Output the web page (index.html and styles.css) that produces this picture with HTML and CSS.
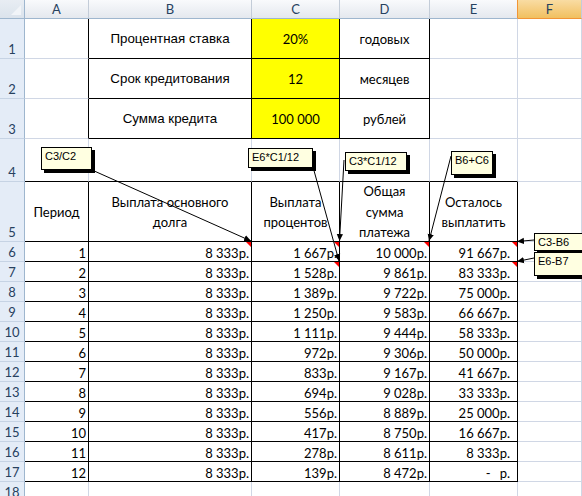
FILE: index.html
```html
<!DOCTYPE html>
<html lang="ru">
<head>
<meta charset="utf-8">
<title>Кредит</title>
<link rel="stylesheet" href="styles.css">
</head>
<body>
<div class="sheet">
  <div class="cell corner"></div>
  <div class="cell ch">A</div>
  <div class="cell ch">B</div>
  <div class="cell ch">C</div>
  <div class="cell ch">D</div>
  <div class="cell ch ch-e">E</div>
  <div class="cell ch ch-sel">F</div>

  <div class="cell rh">1</div>
  <div class="cell kr"></div>
  <div class="cell kr kb mid arial">Процентная ставка</div>
  <div class="cell kr kb mid yel">20%</div>
  <div class="cell kr kb mid">годовых</div>
  <div class="cell"></div>
  <div class="cell"></div>

  <div class="cell rh">2</div>
  <div class="cell kr"></div>
  <div class="cell kr kb mid arial">Срок кредитования</div>
  <div class="cell kr kb mid yel">12</div>
  <div class="cell kr kb mid">месяцев</div>
  <div class="cell"></div>
  <div class="cell"></div>

  <div class="cell rh">3</div>
  <div class="cell kr"></div>
  <div class="cell kr kb mid arial">Сумма кредита</div>
  <div class="cell kr kb mid yel">100 000</div>
  <div class="cell kr kb mid">рублей</div>
  <div class="cell"></div>
  <div class="cell"></div>

  <div class="cell rh">4</div>
  <div class="cell kb"></div>
  <div class="cell kb"></div>
  <div class="cell kb"></div>
  <div class="cell kb"></div>
  <div class="cell kb"></div>
  <div class="cell"></div>

  <div class="cell rh">5</div>
  <div class="cell kr kb head">Период</div>
  <div class="cell kr kb head">Выплата основного<br>долга</div>
  <div class="cell kr kb head">Выплата<br>процентов</div>
  <div class="cell kr kb head">Общая<br>сумма<br>платежа</div>
  <div class="cell kr kb head">Осталось<br>выплатить</div>
  <div class="cell"></div>

  <div class="cell rh">6</div>
  <div class="cell kr kb num">1</div>
  <div class="cell kr kb num note">8 333р.</div>
  <div class="cell kr kb num note">1 667р.</div>
  <div class="cell kr kb num note">10 000р.</div>
  <div class="cell kr kb num ne note">91 667р.</div>
  <div class="cell"></div>

  <div class="cell rh">7</div>
  <div class="cell kr kb num">2</div>
  <div class="cell kr kb num">8 333р.</div>
  <div class="cell kr kb num note">1 528р.</div>
  <div class="cell kr kb num">9 861р.</div>
  <div class="cell kr kb num ne note">83 333р.</div>
  <div class="cell"></div>

  <div class="cell rh">8</div>
  <div class="cell kr kb num">3</div>
  <div class="cell kr kb num">8 333р.</div>
  <div class="cell kr kb num">1 389р.</div>
  <div class="cell kr kb num">9 722р.</div>
  <div class="cell kr kb num ne">75 000р.</div>
  <div class="cell"></div>

  <div class="cell rh">9</div>
  <div class="cell kr kb num">4</div>
  <div class="cell kr kb num">8 333р.</div>
  <div class="cell kr kb num">1 250р.</div>
  <div class="cell kr kb num">9 583р.</div>
  <div class="cell kr kb num ne">66 667р.</div>
  <div class="cell"></div>

  <div class="cell rh">10</div>
  <div class="cell kr kb num">5</div>
  <div class="cell kr kb num">8 333р.</div>
  <div class="cell kr kb num">1 111р.</div>
  <div class="cell kr kb num">9 444р.</div>
  <div class="cell kr kb num ne">58 333р.</div>
  <div class="cell"></div>

  <div class="cell rh">11</div>
  <div class="cell kr kb num">6</div>
  <div class="cell kr kb num">8 333р.</div>
  <div class="cell kr kb num">972р.</div>
  <div class="cell kr kb num">9 306р.</div>
  <div class="cell kr kb num ne">50 000р.</div>
  <div class="cell"></div>

  <div class="cell rh">12</div>
  <div class="cell kr kb num">7</div>
  <div class="cell kr kb num">8 333р.</div>
  <div class="cell kr kb num">833р.</div>
  <div class="cell kr kb num">9 167р.</div>
  <div class="cell kr kb num ne">41 667р.</div>
  <div class="cell"></div>

  <div class="cell rh">13</div>
  <div class="cell kr kb num">8</div>
  <div class="cell kr kb num">8 333р.</div>
  <div class="cell kr kb num">694р.</div>
  <div class="cell kr kb num">9 028р.</div>
  <div class="cell kr kb num ne">33 333р.</div>
  <div class="cell"></div>

  <div class="cell rh">14</div>
  <div class="cell kr kb num">9</div>
  <div class="cell kr kb num">8 333р.</div>
  <div class="cell kr kb num">556р.</div>
  <div class="cell kr kb num">8 889р.</div>
  <div class="cell kr kb num ne">25 000р.</div>
  <div class="cell"></div>

  <div class="cell rh">15</div>
  <div class="cell kr kb num">10</div>
  <div class="cell kr kb num">8 333р.</div>
  <div class="cell kr kb num">417р.</div>
  <div class="cell kr kb num">8 750р.</div>
  <div class="cell kr kb num ne">16 667р.</div>
  <div class="cell"></div>

  <div class="cell rh">16</div>
  <div class="cell kr kb num">11</div>
  <div class="cell kr kb num">8 333р.</div>
  <div class="cell kr kb num">278р.</div>
  <div class="cell kr kb num">8 611р.</div>
  <div class="cell kr kb num ne">8 333р.</div>
  <div class="cell"></div>

  <div class="cell rh">17</div>
  <div class="cell kr kb num">12</div>
  <div class="cell kr kb num">8 333р.</div>
  <div class="cell kr kb num">139р.</div>
  <div class="cell kr kb num">8 472р.</div>
  <div class="cell kr kb num ne"><span class="dash">-</span>р.</div>
  <div class="cell"></div>

  <div class="cell rh">18</div>
  <div class="cell"></div>
  <div class="cell"></div>
  <div class="cell"></div>
  <div class="cell"></div>
  <div class="cell"></div>
  <div class="cell"></div>
</div>

<svg class="arrows" width="582" height="496" viewBox="0 0 582 496">
  <defs>
    <marker id="ah" viewBox="0 0 10 10" refX="10" refY="5" markerWidth="7" markerHeight="7" markerUnits="userSpaceOnUse" orient="auto">
      <path d="M0,0.5 L10,5 L0,9.5 z" fill="#000"/>
    </marker>
  </defs>
  <g stroke="#000" stroke-width="1" fill="none" marker-end="url(#ah)">
    <line x1="92" y1="170" x2="251" y2="241"/>
    <line x1="313" y1="167" x2="339" y2="261"/>
    <line x1="344" y1="160" x2="339.5" y2="241"/>
    <line x1="451" y1="156" x2="429" y2="241"/>
    <line x1="534" y1="240" x2="517" y2="241.5"/>
    <line x1="534" y1="258" x2="517" y2="261.5"/>
  </g>
</svg>

<div class="cmt c1">C3/C2</div>
<div class="cmt c2">E6*C1/12</div>
<div class="cmt c3">C3*C1/12</div>
<div class="cmt c4">B6+C6</div>
<div class="cmt c5">C3-B6</div>
<div class="cmt c6">E6-B7</div>
</body>
</html>
```

FILE: styles.css
```css
* {
  box-sizing: border-box;
  margin: 0;
  padding: 0;
}

html,
body {
  width: 582px;
  height: 496px;
  overflow: hidden;
  background: #fff;
}

body {
  position: relative;
  font-family: Lato, "Liberation Sans", sans-serif;
  font-size: 13px;
  color: #000;
}

.sheet {
  display: grid;
  grid-template-columns: 25px 64px 163px 88px 90px 88px 64px;
  grid-template-rows: 19px 40px 40px 40px 43px 60px repeat(13, 20px);
  width: 582px;
}

.cell {
  position: relative;
  display: flex;
  align-items: flex-end;
  line-height: 16px;
  white-space: nowrap;
  border-right: 1px solid #d0d7e5;
  border-bottom: 1px solid #d0d7e5;
}

/* headers */
.ch {
  align-items: center;
  justify-content: center;
  color: #27415f;
  background: linear-gradient(#f9fafc, #e4e8ee);
  border-right: 1px solid #c3ccd8;
  border-bottom: 1px solid #9eb6ce;
}

.ch-e {
  border-right-color: #f29536;
}

.ch-sel {
  background: linear-gradient(#f9dca3, #f1c060);
  border-bottom-color: #f29536;
  color: #27415f;
}

.corner {
  background: linear-gradient(#e8edf3, #dbe3ec);
  border-right: 1px solid #9eb6ce;
  border-bottom: 1px solid #9eb6ce;
}

.corner::after {
  content: "";
  position: absolute;
  right: 3px;
  bottom: 3px;
  border-style: solid;
  border-width: 0 0 10px 10px;
  border-color: transparent transparent #f1f4f8 transparent;
}

.rh {
  justify-content: center;
  color: #27415f;
  background: #e4ecf7;
  border-right: 1px solid #9eb6ce;
  border-bottom: 1px solid #c6d3e4;
  padding-bottom: 1px;
}

/* black borders */
.kr {
  border-right-color: #000;
}

.kb {
  border-bottom-color: #000;
}

/* content styles */
.mid {
  align-items: center;
  justify-content: center;
}

.arial {
  font-family: "Liberation Sans", Arial, sans-serif;
  font-size: 13.33px;
}

.yel {
  background: #ffff00;
}

.head {
  align-items: center;
  justify-content: center;
  text-align: center;
  line-height: 20.5px;
  padding-top: 1px;
}

.num {
  justify-content: flex-end;
  padding-right: 2px;
}

.ne {
  padding-right: 7px;
}

.dash {
  margin-right: 9px;
}

.note::after {
  content: "";
  position: absolute;
  top: 0;
  right: 0;
  border-style: solid;
  border-width: 0 5px 5px 0;
  border-color: transparent #ff0000 transparent transparent;
}

/* overlay: arrows and comments */
.arrows {
  position: absolute;
  left: 0;
  top: 0;
  pointer-events: none;
}

.cmt {
  position: absolute;
  background: #ffffe1;
  border: 1px solid #000;
  box-shadow: 3px 3px 0 #000;
  font-family: "Liberation Sans", Arial, sans-serif;
  font-size: 11px;
  line-height: 13px;
  padding: 2px 3px;
  white-space: nowrap;
}

.c1 { left: 41px; top: 147px; width: 51px; height: 23px; }
.c2 { left: 248px; top: 148px; width: 65px; height: 20px; }
.c3 { left: 345px; top: 152px; width: 62px; height: 19px; }
.c4 { left: 451px; top: 151px; width: 42px; height: 24px; }
.c5 { left: 534px; top: 233px; width: 56px; height: 18px; }
.c6 { left: 534px; top: 252px; width: 56px; height: 24px; }
```
